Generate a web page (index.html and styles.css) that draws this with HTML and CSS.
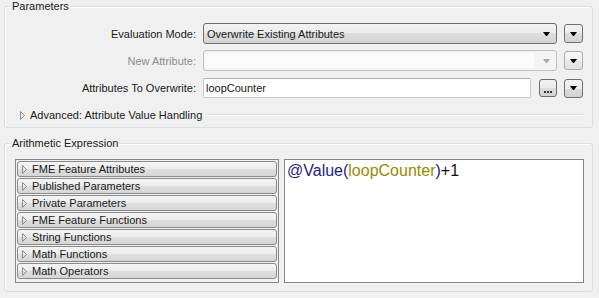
FILE: index.html
```html
<!DOCTYPE html>
<html lang="en">
<head>
    <meta charset="UTF-8">
    <title>Attribute Value</title>
    <link rel="stylesheet" href="styles.css">
</head>
<body>
    <div class="panel">
        <div class="group params">
            <span class="group-title">Parameters</span>

            <div class="row">
                <label class="row-label">Evaluation Mode:</label>
                <div class="combo">
                    <span class="combo-text">Overwrite Existing Attributes</span>
                    <span class="arrow"></span>
                </div>
                <button class="menu-btn"><span class="arrow"></span></button>
            </div>

            <div class="row row-2">
                <label class="row-label disabled">New Attribute:</label>
                <div class="combo combo-disabled">
                    <span class="combo-edit"></span>
                    <span class="arrow arrow-light"></span>
                </div>
                <button class="menu-btn"><span class="arrow"></span></button>
            </div>

            <div class="row row-3">
                <label class="row-label">Attributes To Overwrite:</label>
                <div class="text-field">loopCounter</div>
                <button class="dots-btn"><span class="dot"></span><span class="dot"></span><span class="dot"></span></button>
                <button class="menu-btn"><span class="arrow"></span></button>
            </div>

            <div class="advanced">
                <svg class="expander" width="5" height="9" viewBox="0 0 5 9"><path d="M0.5 0.5 L4.5 4.5 L0.5 8.5 Z" fill="none" stroke="#8c8c8c"/></svg>
                <span>Advanced: Attribute Value Handling</span>
                <span class="rule"></span>
            </div>
        </div>

        <div class="group expr">
            <span class="group-title">Arithmetic Expression</span>
            <div class="expr-body">
                <div class="tree">
                    <div class="tree-item"><svg class="expander" width="5" height="9" viewBox="0 0 5 9"><path d="M0.5 0.5 L4.5 4.5 L0.5 8.5 Z" fill="none" stroke="#8c8c8c"/></svg>FME Feature Attributes</div>
                    <div class="tree-item"><svg class="expander" width="5" height="9" viewBox="0 0 5 9"><path d="M0.5 0.5 L4.5 4.5 L0.5 8.5 Z" fill="none" stroke="#8c8c8c"/></svg>Published Parameters</div>
                    <div class="tree-item"><svg class="expander" width="5" height="9" viewBox="0 0 5 9"><path d="M0.5 0.5 L4.5 4.5 L0.5 8.5 Z" fill="none" stroke="#8c8c8c"/></svg>Private Parameters</div>
                    <div class="tree-item"><svg class="expander" width="5" height="9" viewBox="0 0 5 9"><path d="M0.5 0.5 L4.5 4.5 L0.5 8.5 Z" fill="none" stroke="#8c8c8c"/></svg>FME Feature Functions</div>
                    <div class="tree-item"><svg class="expander" width="5" height="9" viewBox="0 0 5 9"><path d="M0.5 0.5 L4.5 4.5 L0.5 8.5 Z" fill="none" stroke="#8c8c8c"/></svg>String Functions</div>
                    <div class="tree-item"><svg class="expander" width="5" height="9" viewBox="0 0 5 9"><path d="M0.5 0.5 L4.5 4.5 L0.5 8.5 Z" fill="none" stroke="#8c8c8c"/></svg>Math Functions</div>
                    <div class="tree-item"><svg class="expander" width="5" height="9" viewBox="0 0 5 9"><path d="M0.5 0.5 L4.5 4.5 L0.5 8.5 Z" fill="none" stroke="#8c8c8c"/></svg>Math Operators</div>
                </div>
                <div class="editor"><span class="fn">@Value</span><span class="paren">(</span><span class="attr">loopCounter</span><span class="fn">)</span><span class="op">+1</span></div>
            </div>
        </div>
    </div>
</body>
</html>
```

FILE: styles.css
```css
body {
    margin: 0;
    background-color: #f0f0f0;
    font-family: "Liberation Sans", Arial, sans-serif;
    font-size: 11px;
    color: #1a1a1a;
}

.panel {
    padding: 6px 6px 0 4px;
}

/* Group boxes */
.group {
    position: relative;
    border: 1px solid #d5dfe5;
    border-radius: 3px;
    box-shadow: inset 1px 1px 0 #fff;
}

.group-title {
    position: absolute;
    top: -7px;
    left: 6px;
    padding: 0 1px;
    line-height: 13px;
    background-color: #f0f0f0;
}

.params {
    padding: 16px 9px 5px 0;
}

.expr {
    margin-top: 15px;
    padding: 15px 8px 8px 10px;
}

/* Parameter rows */
.row {
    display: flex;
    align-items: center;
    height: 21px;
}

.row-2 {
    margin-top: 6px;
}

.row-3 {
    margin-top: 7px;
    height: 20px;
}

.row-label {
    width: 191px;
    margin-right: 7px;
    text-align: right;
    flex-shrink: 0;
}

.row-label.disabled {
    color: #8d8d8d;
}

.combo {
    flex: 1;
    height: 21px;
    box-sizing: border-box;
    display: flex;
    align-items: center;
    border: 1px solid #707070;
    border-radius: 3px;
    background: linear-gradient(#f3f3f3, #ebebeb 50%, #dedede 50%, #d4d4d4);
    padding: 0 6px 0 3px;
}

.combo-text {
    flex: 1;
}

.combo-disabled {
    border-color: #c2c2c2;
    background: #f4f4f4;
    padding: 2px 6px 2px 1px;
}

.combo-edit {
    flex: 1;
    align-self: stretch;
    background-color: #fbfbfb;
    margin-right: 9px;
}

.arrow {
    width: 1px;
    height: 0;
    border-top: 4px solid #000;
    border-left: 3px solid transparent;
    border-right: 3px solid transparent;
}

.arrow-light {
    border-top-color: #a8a8a8;
}

.menu-btn {
    width: 19px;
    height: 19px;
    margin-left: 7px;
    padding: 0;
    flex-shrink: 0;
    display: flex;
    align-items: center;
    justify-content: center;
    border: 1px solid #707070;
    border-radius: 3px;
    background: linear-gradient(#f3f3f3, #ebebeb 50%, #dddddd 50%, #d2d2d2);
}

.row-2 .menu-btn {
    border-color: #adadad;
    background: linear-gradient(#f8f8f8, #f0f0f0 50%, #e8e8e8 50%, #e2e2e2);
}

.text-field {
    flex: 1;
    height: 20px;
    box-sizing: border-box;
    border: 1px solid #c7cacf;
    border-top-color: #abadb3;
    border-radius: 2px;
    background-color: #fff;
    padding: 0 3px 0 2px;
    line-height: 18px;
}

.dots-btn {
    width: 18px;
    height: 18px;
    margin-left: 8px;
    padding: 0 0 3px;
    flex-shrink: 0;
    display: flex;
    align-items: flex-end;
    justify-content: center;
    gap: 1px;
    border: 1px solid #707070;
    border-radius: 3px;
    background: linear-gradient(#f3f3f3, #ebebeb 50%, #dddddd 50%, #d2d2d2);
}

.dot {
    width: 2px;
    height: 2px;
    background-color: #303040;
}

/* Advanced section */
.advanced {
    display: flex;
    align-items: center;
    height: 14px;
    margin-top: 10px;
    padding-left: 15px;
}

.expander {
    flex-shrink: 0;
    margin-right: 5px;
}

.rule {
    flex: 1;
    margin-left: 4px;
    border-top: 1px solid #d5dfe5;
    border-bottom: 1px solid #fff;
}

/* Arithmetic expression */
.expr-body {
    display: flex;
    gap: 5px;
    height: 124px;
}

.tree {
    width: 264px;
    box-sizing: border-box;
    border: 1px solid #828790;
    padding: 1px;
}

.tree-item {
    height: 16px;
    box-sizing: border-box;
    margin-bottom: 1px;
    display: flex;
    align-items: center;
    padding-left: 4px;
    border: 1px solid #8a8a8a;
    border-radius: 3px;
    background: linear-gradient(#f4f4f4, #ececec 50%, #dfdfdf 50%, #d6d6d6);
}

.tree-item .expander {
    margin-right: 5px;
}

.editor {
    flex: 1;
    box-sizing: border-box;
    border: 1px solid #828790;
    background-color: #fff;
    padding: 1px 2px;
    font-size: 16px;
    line-height: 20px;
}

.fn {
    color: #1c1c80;
}

.paren {
    color: #2222b0;
}

.attr {
    color: #9a8a00;
}

.op {
    color: #111;
}
```
